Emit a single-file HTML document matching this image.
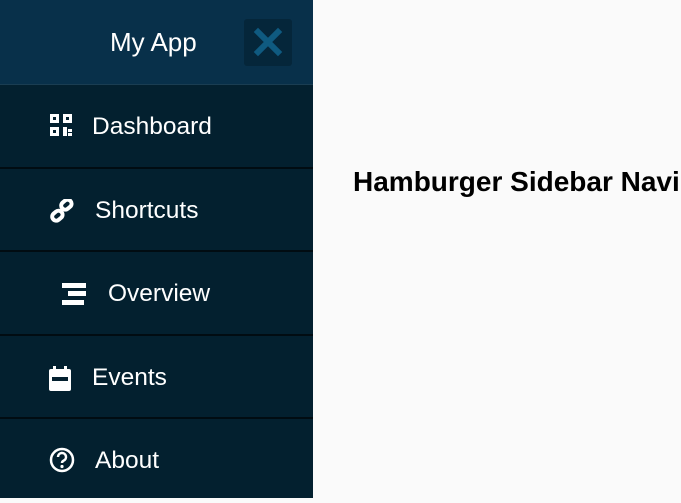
<!DOCTYPE html>
<html><head><style>
*{margin:0;padding:0;box-sizing:border-box}
body{width:681px;height:498px;overflow:hidden;background:#fafafa;font-family:"Liberation Sans",sans-serif;position:relative}
.sb{position:absolute;left:0;top:0;width:313px;height:498px;background:#03202f}
.hd{height:85px;background:#08304a;position:relative;border-bottom:1px solid #1a3d52}
.hd .t{position:absolute;left:110px;top:27px;color:#fff;font-size:26px}
.x{position:absolute;left:244px;top:19px;width:48px;height:47px;background:#05263a;border-radius:3px}
.it{height:83.5px;position:relative;border-bottom:2px solid #010c12;color:#fff;font-size:24.5px}
.it span{position:absolute;top:28px}
.it svg{position:absolute}
h1{position:absolute;left:353px;top:166px;font-size:28px;font-weight:bold;color:#000;white-space:nowrap}
</style></head><body>
<div class="sb">
<div class="hd"><div class="t">My App</div>
<div class="x"><svg width="48" height="47"><path d="M14 13L34 33M34 13L14 33" stroke="#0f5a80" stroke-width="6" stroke-linecap="square"/></svg></div></div>
<div class="it"><svg style="left:50px;top:29px" width="23" height="22"><g fill="#fff"><rect x="0" y="0" width="9" height="9"/><rect x="13" y="0" width="9" height="9"/><rect x="0" y="13" width="9" height="9"/><rect x="13" y="13" width="4" height="9"/><rect x="18" y="15" width="4" height="3"/><rect x="18" y="19" width="4" height="3"/></g><g fill="#03202f"><rect x="3" y="3" width="3" height="3"/><rect x="16" y="3" width="3" height="3"/><rect x="3" y="16" width="3" height="3"/></g></svg><span style="left:92px">Dashboard</span></div>
<div class="it"><svg style="left:49px;top:30px" width="26" height="24" viewBox="0 0 26 24"><g fill="none" stroke="#fff" stroke-width="4"><rect x="12" y="2" width="11" height="8" rx="4" transform="rotate(-40 17 6)"/><rect x="3" y="13" width="11" height="8" rx="4" transform="rotate(-40 8 17)"/></g></svg><span style="left:95px">Shortcuts</span></div>
<div class="it"><svg style="left:62px;top:31px" width="26" height="22"><g fill="#fff"><rect x="0" y="0" width="24" height="5"/><rect x="6" y="8" width="18" height="5"/><rect x="0" y="17" width="22" height="5"/></g></svg><span style="left:108px">Overview</span></div>
<div class="it"><svg style="left:49px;top:30px" width="23" height="26"><g fill="#fff"><rect x="4" y="0" width="3" height="5"/><rect x="15" y="0" width="3" height="5"/><rect x="0" y="3" width="22" height="22" rx="2"/></g><rect x="3" y="11" width="16" height="4" fill="#03202f"/></svg><span style="left:92px">Events</span></div>
<div class="it" style="border:none"><svg style="left:49px;top:28px" width="26" height="26"><circle cx="13" cy="13" r="11" fill="none" stroke="#fff" stroke-width="2.5"/><path d="M9 10a4 4 0 1 1 5.5 3.7c-1 .5-1.5 1-1.5 2.3" fill="none" stroke="#fff" stroke-width="2.5"/><circle cx="13" cy="19.5" r="1.6" fill="#fff"/></svg><span style="left:95px">About</span></div>
</div>
<h1>Hamburger Sidebar Navi</h1>
</body></html>
